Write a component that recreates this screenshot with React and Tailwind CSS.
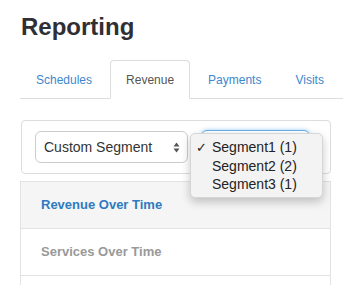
import React from 'react';

const tabs = ['Schedules', 'Revenue', 'Payments', 'Visits'];
const segments = [
  { label: 'Segment1 (1)', checked: true },
  { label: 'Segment2 (2)', checked: false },
  { label: 'Segment3 (1)', checked: false },
];

function UpDownArrows() {
  return (
    <svg width="7" height="11" viewBox="0 0 7 11" className="shrink-0">
      <path d="M3.5 0.5 L6.5 4.5 L0.5 4.5 Z" fill="#555" />
      <path d="M3.5 10.5 L6.5 6.5 L0.5 6.5 Z" fill="#555" />
    </svg>
  );
}

export default function App() {
  return (
    <div className="h-screen w-full overflow-hidden bg-white" style={{ fontFamily: '"Liberation Sans", Arial, sans-serif' }}>
      <div className="ml-[20px] w-[311px]">
        <h1 className="mt-[14px] ml-[1px] text-[24px] leading-[26px] font-bold text-[#2f2f35]">Reporting</h1>

        {/* tabs */}
        <ul className="mt-[20px] flex h-[39px] w-[323px] border-b border-[#ddd]">
          {tabs.map((t) => {
            const active = t === 'Revenue';
            return (
              <li key={t} className="mr-[2px]">
                <div
                  className={
                    'flex h-[39px] items-center rounded-t-[4px] border px-[15px] text-[12px] ' +
                    (active
                      ? 'border-[#ddd] border-b-white bg-white text-[#555]'
                      : 'border-transparent text-[#3c87cd]')
                  }
                >
                  {t}
                </div>
              </li>
            );
          })}
        </ul>

        {/* filter panel */}
        <div className="relative mt-[21px] ml-[1px] flex h-[54px] items-start gap-[13px] rounded-[4px] border border-[#ddd] pt-[10px] pl-[13px]">
          <div className="flex h-[32px] w-[153px] items-center justify-between rounded-[6px] border border-[#ccc] bg-white pr-[7px] pl-[8px] text-[14px] text-[#333]">
            <span>Custom Segment</span>
            <UpDownArrows />
          </div>
          <div className="-mt-[1px] h-[33px] w-[109px] rounded-[6px] border border-[#66afe9] bg-white shadow-[0_0_4px_rgba(102,175,233,0.6)]" />

          {/* open select menu */}
          <div className="absolute top-[12px] left-[168px] flex h-[65px] w-[133px] flex-col justify-center rounded-[5px] border border-[#d6d6d6] bg-[#f3f3f3] shadow-[0_4px_10px_rgba(0,0,0,0.22)]">
            {segments.map((s) => (
              <div key={s.label} className="flex h-[18.5px] items-center text-[14px] leading-none text-[#222]">
                <span className="w-[21px] pl-[5px] text-[13px]">{s.checked ? '✓' : ''}</span>
                <span>{s.label}</span>
              </div>
            ))}
          </div>
        </div>

        {/* report list */}
        <div className="mt-[7px] border-x border-t border-[#e3e3e3]">
          <div className="flex h-[47px] items-center border-b border-[#e3e3e3] bg-[#f5f5f5] px-[20px] text-[13px] font-bold text-[#2e7bc0]">
            Revenue Over Time
          </div>
          <div className="flex h-[47px] items-center border-b border-[#e3e3e3] bg-white px-[20px] text-[13px] font-bold text-[#999]">
            Services Over Time
          </div>
          <div className="h-[9px] bg-white" />
        </div>
      </div>
    </div>
  );
}
